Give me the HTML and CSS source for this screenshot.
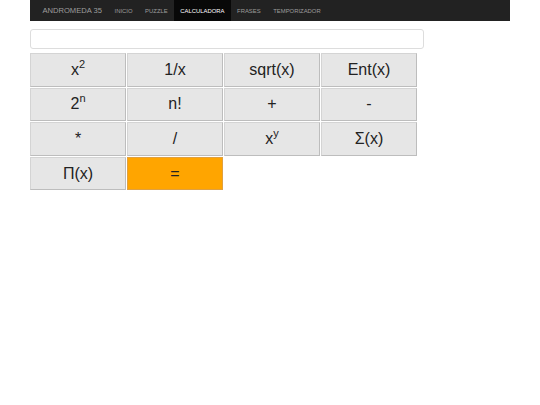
FILE: index.html
```html
<!DOCTYPE html>
<html lang="es">
<head>
<meta charset="utf-8">
<title>Calculadora</title>
<link rel="stylesheet" href="styles.css">
</head>
<body>
<nav class="navbar">
  <a class="brand" href="#">ANDROMEDA 35</a>
  <ul class="nav">
    <li><a href="#">INICIO</a></li>
    <li><a href="#">PUZZLE</a></li>
    <li class="active"><a href="#">CALCULADORA</a></li>
    <li><a href="#">FRASES</a></li>
    <li><a href="#">TEMPORIZADOR</a></li>
  </ul>
</nav>
<main class="content">
  <input class="display" type="text">
  <div class="keys">
    <button class="key">x<sup>2</sup></button>
    <button class="key">1/x</button>
    <button class="key">sqrt(x)</button>
    <button class="key">Ent(x)</button>
    <button class="key">2<sup>n</sup></button>
    <button class="key">n!</button>
    <button class="key">+</button>
    <button class="key">-</button>
    <button class="key">*</button>
    <button class="key">/</button>
    <button class="key">x<sup>y</sup></button>
    <button class="key">Σ(x)</button>
    <button class="key">Π(x)</button>
    <button class="key key-equals">=</button>
  </div>
</main>
</body>
</html>
```

FILE: styles.css
```css
html, body {
  margin: 0;
  padding: 0;
  background: #ffffff;
  font-family: "Liberation Sans", Arial, sans-serif;
}

.navbar {
  width: 480px;
  height: 21px;
  margin-left: 30px;
  background: #222222;
  display: flex;
  align-items: stretch;
}

.brand {
  display: flex;
  align-items: center;
  padding: 0 6.3px 0 12.4px;
  font-size: 7.6px;
  color: #9d9d9d;
  text-decoration: none;
}

.nav {
  list-style: none;
  margin: 0;
  padding: 0;
  display: flex;
}

.nav li {
  display: flex;
}

.nav a {
  display: flex;
  align-items: center;
  padding: 0 6.3px;
  font-size: 5.9px;
  color: #9d9d9d;
  text-decoration: none;
}

.nav li.active a {
  background: #080808;
  color: #ffffff;
}

.content {
  padding: 8px 0 0 30px;
}

.display {
  display: block;
  box-sizing: border-box;
  width: 394px;
  height: 20px;
  margin: 0;
  border: 1px solid #dddddd;
  border-radius: 3px;
  background: #ffffff;
  outline: none;
}

.keys {
  margin-top: 4px;
  display: grid;
  grid-template-columns: repeat(4, 96px);
  grid-auto-rows: 33.6px;
  column-gap: 1px;
  row-gap: 1px;
}

.key {
  box-sizing: border-box;
  margin: 0;
  padding: 0;
  border: 1px solid #c8c8c8;
  border-color: #d4d4d4 #bdbdbd #bdbdbd #d4d4d4;
  background: #e6e6e6;
  color: #222222;
  font-family: "Liberation Sans", Arial, sans-serif;
  font-size: 16px;
  line-height: 1;
}

.key sup {
  font-size: 11px;
  vertical-align: 7px;
  line-height: 0;
}

.key-equals {
  background: #ffa500;
  border-color: #e0a040;
}
```
